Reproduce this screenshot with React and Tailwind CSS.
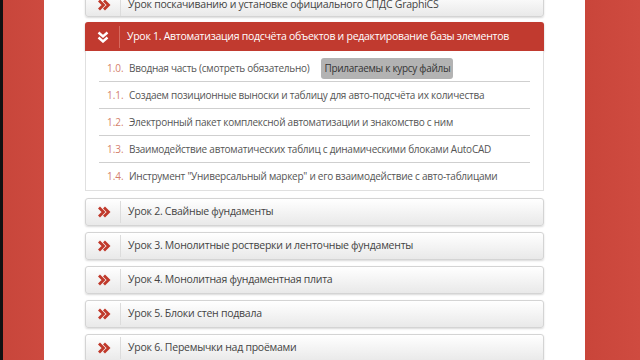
import React from "react";

const font = { fontFamily: '"Open Sans", "DejaVu Sans", sans-serif' };

function ChevRight() {
  return (
    <svg width="14" height="12" viewBox="0 0 14 12">
      <polyline points="2,1.5 6.5,6 2,10.5" fill="none" stroke="#c0392b" strokeWidth="2.8" strokeLinejoin="miter" />
      <polyline points="7,1.5 11.5,6 7,10.5" fill="none" stroke="#c0392b" strokeWidth="2.8" strokeLinejoin="miter" />
    </svg>
  );
}

function ChevDown() {
  return (
    <svg width="12" height="12" viewBox="0 0 12 12">
      <polyline points="1.5,1.5 6,5.5 10.5,1.5" fill="none" stroke="#fff" strokeWidth="2.4" />
      <polyline points="1.5,6.5 6,10.5 10.5,6.5" fill="none" stroke="#fff" strokeWidth="2.4" />
    </svg>
  );
}

function Row({ title, className = "" }) {
  return (
    <div className={"flex items-center rounded-[3px] border border-[#d4d4d4] bg-gradient-to-b from-[#ffffff] to-[#e9e9e9] shadow-[0_1px_2px_rgba(0,0,0,0.15)] " + className}>
      <div className="flex w-[34px] justify-center pl-[2px]">
        <ChevRight />
      </div>
      <div className="h-[22px] w-px bg-[#dcdcdc]" />
      <div className="pl-[7px] text-[10.5px] tracking-[-0.25px] text-[#444]">{title}</div>
    </div>
  );
}

const items = [
  ["1.0.", "Вводная часть (смотреть обязательно)", true],
  ["1.1.", "Создаем позиционные выноски и таблицу для авто-подсчёта их количества"],
  ["1.2.", "Электронный пакет комплексной автоматизации и знакомство с ним"],
  ["1.3.", "Взаимодействие автоматических таблиц с динамическими блоками AutoCAD"],
  ["1.4.", "Инструмент \"Универсальный маркер\" и его взаимодействие с авто-таблицами"],
];

export default function App() {
  return (
    <div className="flex h-[360px] w-[640px] overflow-hidden bg-white" style={font}>
      <div className="w-[3px] bg-[#111]" />
      <div className="w-[41px] bg-gradient-to-r from-[#c8463b] to-[#cd4a3f]" />
      <div className="flex-1 bg-white px-[41px]">
        <div className="mt-[-7px] flex flex-col">
          <Row className="h-[24px]" title="Урок поскачиванию и установке официального СПДС GraphiCS" />
          <div className="mt-[5px] flex h-[29px] items-center rounded-t-[3px] bg-[#c13a2f] shadow-[0_1px_2px_rgba(0,0,0,0.25)]">
            <div className="flex w-[34px] justify-center pl-[2px]">
              <ChevDown />
            </div>
            <div className="h-[22px] w-px bg-[#d66a5f]" />
            <div className="pl-[7px] text-[10.5px] tracking-[-0.27px] text-white">
              Урок 1. Автоматизация подсчёта объектов и редактирование базы элементов
            </div>
          </div>
          <div className="flex flex-col border-x border-b border-[#e0e0e0] bg-white px-[13px] pt-[4px]">
            {items.map(([n, t, btn], i) => (
              <div
                key={n}
                className={"flex h-[27px] items-center " + (i < items.length - 1 ? "border-b border-[#cfcfcf]" : "")}
              >
                <span className="w-[30px] pl-[8px] text-[10px] text-[#d47f6c]">{n}</span>
                <span className="text-[10px] tracking-[-0.25px] text-[#555]">{t}</span>
                {btn && (
                  <span className="ml-[12px] rounded-[3px] bg-[#b3b3b3] px-[3px] py-[3px] text-[10px] tracking-[-0.3px] text-[#333]">
                    Прилагаемы к курсу файлы
                  </span>
                )}
              </div>
            ))}
          </div>
          <Row className="mt-[7px] h-[28px]" title="Урок 2. Свайные фундаменты" />
          <Row className="mt-[6px] h-[28px]" title="Урок 3. Монолитные ростверки и ленточные фундаменты" />
          <Row className="mt-[6px] h-[28px]" title="Урок 4. Монолитная фундаментная плита" />
          <Row className="mt-[6px] h-[28px]" title="Урок 5. Блоки стен подвала" />
          <Row className="mt-[6px] h-[28px]" title="Урок 6. Перемычки над проёмами" />
        </div>
      </div>
      <div className="w-[55px] bg-gradient-to-r from-[#c9453a] to-[#cf4b40]" />
    </div>
  );
}
